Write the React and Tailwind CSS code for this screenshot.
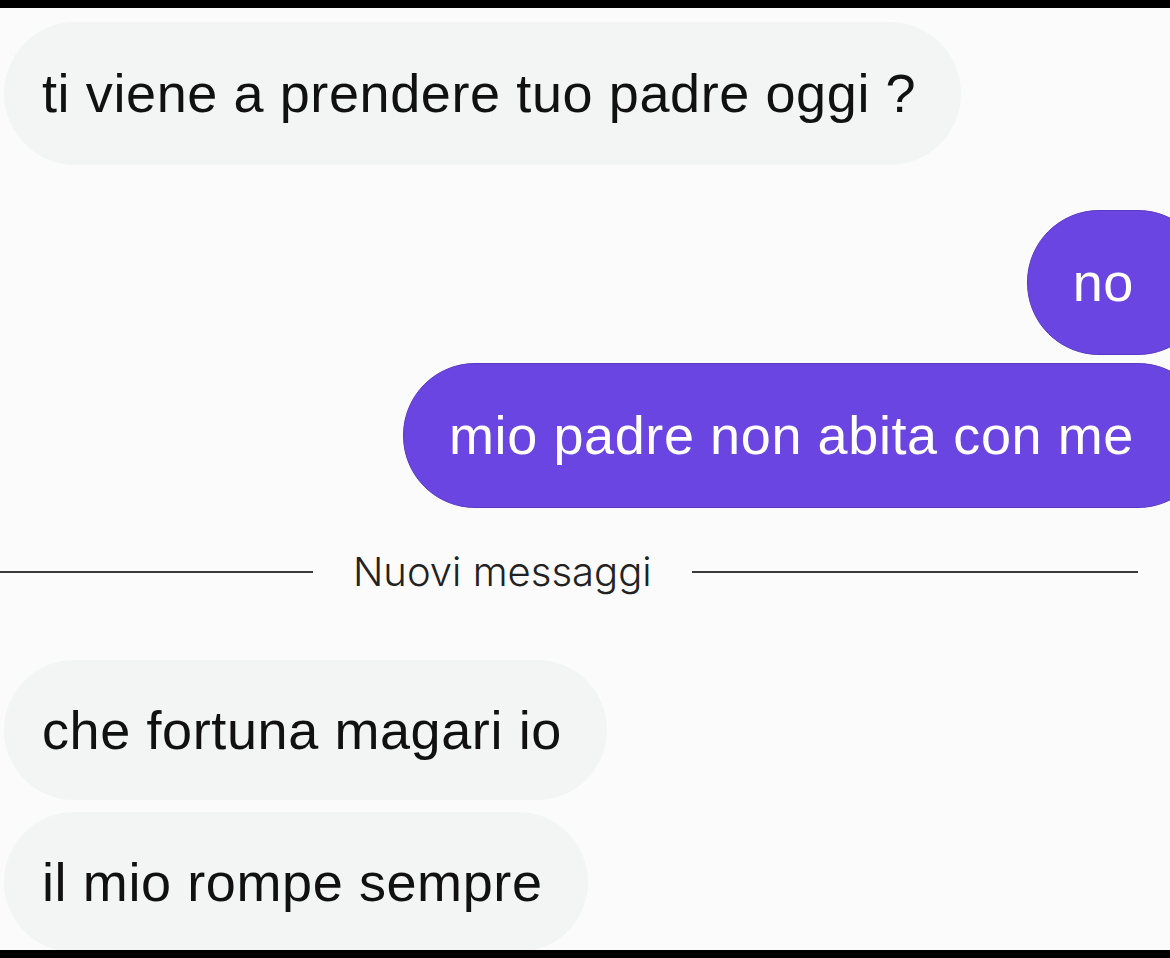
export default function App() {
  const font = { fontFamily: '"Liberation Sans", Arial, sans-serif' };

  return (
    <div className="w-[1170px] h-[958px] overflow-hidden bg-[#fbfbfb] flex flex-col" style={font}>
      {/* top bar */}
      <div className="h-[8px] bg-black shrink-0" />

      <div className="flex-1 flex flex-col overflow-hidden">
        {/* incoming */}
        <div className="mt-[14px] flex">
          <div className="ml-[4px] h-[143px] flex items-center pl-[38px] pr-[45px] rounded-[72px] bg-[#f3f4f4] text-[54px] tracking-[0.6px] text-[#111]">
            ti viene a prendere tuo padre oggi ?
          </div>
        </div>

        {/* outgoing */}
        <div className="mt-[45px] flex justify-end -mr-[40px]">
          <div className="h-[145px] flex items-center pl-[45px] pr-[75px] rounded-[72px] bg-[#6a45e2] border border-[#5a3ac4] text-[54px] tracking-[0.6px] text-white">
            no
          </div>
        </div>
        <div className="mt-[8px] flex justify-end -mr-[40px]">
          <div className="h-[145px] flex items-center pl-[45px] pr-[75px] rounded-[72px] bg-[#6a45e2] border border-[#5a3ac4] text-[54px] tracking-[0.6px] text-white">
            mio padre non abita con me
          </div>
        </div>

        {/* divider */}
        <div className="mt-[48px] flex items-center h-[32px]">
          <div className="w-[313px] h-[2px] bg-[#3a3a3a]" />
          <div className="mx-[40px] text-[40px] font-light text-[#222] leading-none" style={{ fontFamily: 'Inter, "Liberation Sans", sans-serif' }}>
            Nuovi messaggi
          </div>
          <div className="flex-1 mr-[32px] h-[2px] bg-[#3a3a3a]" />
        </div>

        {/* incoming new */}
        <div className="mt-[72px] flex">
          <div className="ml-[4px] h-[140px] flex items-center pl-[38px] pr-[45px] rounded-[70px] bg-[#f3f4f4] text-[54px] tracking-[0.6px] text-[#111]">
            che fortuna magari io
          </div>
        </div>
        <div className="mt-[12px] flex">
          <div className="ml-[4px] h-[140px] flex items-center pl-[38px] pr-[45px] rounded-[70px] bg-[#f3f4f4] text-[54px] tracking-[0.6px] text-[#111]">
            il mio rompe sempre
          </div>
        </div>
      </div>

      {/* bottom bar */}
      <div className="h-[8px] bg-black shrink-0" />
    </div>
  );
}
